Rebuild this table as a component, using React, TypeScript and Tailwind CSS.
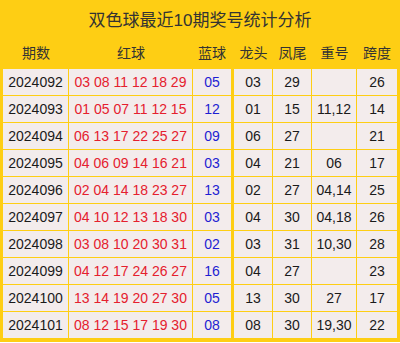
import React from "react";

const rows: [string, string, string, string, string, string, string][] = [
  ["2024092", "03 08 11 12 18 29", "05", "03", "29", "", "26"],
  ["2024093", "01 05 07 11 12 15", "12", "01", "15", "11,12", "14"],
  ["2024094", "06 13 17 22 25 27", "09", "06", "27", "", "21"],
  ["2024095", "04 06 09 14 16 21", "03", "04", "21", "06", "17"],
  ["2024096", "02 04 14 18 23 27", "13", "02", "27", "04,14", "25"],
  ["2024097", "04 10 12 13 18 30", "03", "04", "30", "04,18", "26"],
  ["2024098", "03 08 10 20 30 31", "02", "03", "31", "10,30", "28"],
  ["2024099", "04 12 17 24 26 27", "16", "04", "27", "", "23"],
  ["2024100", "13 14 19 20 27 30", "05", "13", "30", "27", "17"],
  ["2024101", "08 12 15 17 19 30", "08", "08", "30", "19,30", "22"],
];

const font = { fontFamily: '"Liberation Sans", "Noto Sans CJK SC", sans-serif' };

export default function App() {
  return (
    <div className="w-[400px] h-[343px] bg-white" style={font}>
      <div className="w-[400px] border-[3px] border-b-[4px] border-[#FECE14] bg-[#FECE14]">
        <div className="h-[35px] flex items-center justify-center text-[17px] text-[#333] pt-[1px]">
          双色球最近10期奖号统计分析
        </div>
        <div className="h-[30px] flex items-center text-[14px] text-[#333]">
          <div className="w-[66px] text-center">期数</div>
          <div className="w-[124px] text-center">红球</div>
          <div className="w-[41px] pr-[3px] text-center">蓝球</div>
          <div className="w-[39px] text-center">龙头</div>
          <div className="w-[39px] text-center">凤尾</div>
          <div className="w-[45px] text-center">重号</div>
          <div className="w-[40px] text-center">跨度</div>
        </div>
        {rows.map((r) => (
          <div key={r[0]} className="flex h-[27px] border-t border-[#FECE14] text-[14px]">
            <div className="w-[66px] bg-[#F3ECEC] border-r border-[#FECE14] flex items-center justify-center text-[#1a1a1a]">{r[0]}</div>
            <div className="w-[124px] bg-[#F3ECEC] border-r border-[#FECE14] flex items-center justify-center text-[#E5202E]">{r[1]}</div>
            <div className="w-[41px] bg-[#F3ECEC] border-r-[3px] border-[#FECE14] flex items-center justify-center text-[#1E1ED2]">{r[2]}</div>
            <div className="w-[39px] bg-[#F3ECEC] border-r border-[#FECE14] flex items-center justify-center text-[#1a1a1a]">{r[3]}</div>
            <div className="w-[39px] bg-[#F3ECEC] border-r border-[#FECE14] flex items-center justify-center text-[#1a1a1a]">{r[4]}</div>
            <div className="w-[45px] bg-[#F3ECEC] border-r border-[#FECE14] flex items-center justify-center text-[#1a1a1a]">{r[5]}</div>
            <div className="w-[40px] bg-[#F3ECEC] flex items-center justify-center text-[#1a1a1a]">{r[6]}</div>
          </div>
        ))}
      </div>
    </div>
  );
}
